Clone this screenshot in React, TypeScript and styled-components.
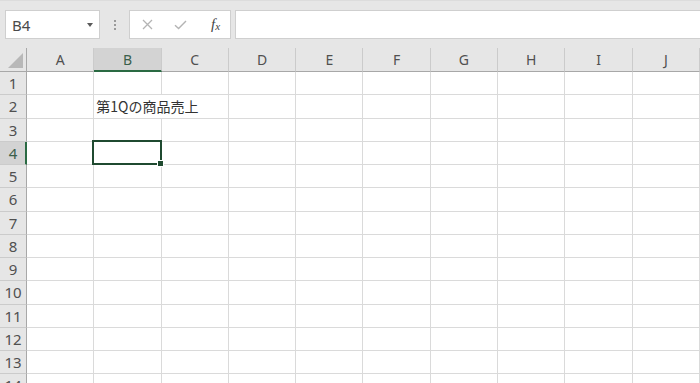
import React from 'react';
import styled, { createGlobalStyle } from 'styled-components';

const COLUMNS = ['A', 'B', 'C', 'D', 'E', 'F', 'G', 'H', 'I', 'J'];
const ROWS = Array.from({ length: 14 }, (_, i) => i + 1);

const SELECTED_COL = 'B';
const SELECTED_ROW = 4;

// cell contents keyed by address
const CELLS: Record<string, string> = {
  B2: '第1Qの商品売上',
};

function App() {
  return (
    <Page>
      <GlobalStyle />
      <FormulaBar>
        <NameBox>
          <span>B4</span>
          <DropArrow />
        </NameBox>
        <Grip>
          <i />
          <i />
          <i />
        </Grip>
        <FormulaButtons>
          <ActionSlot>
            <svg width="11" height="11" viewBox="0 0 11 11">
              <path d="M1 1L10 10M10 1L1 10" stroke="#b4b4b4" strokeWidth="1.3" fill="none" />
            </svg>
          </ActionSlot>
          <ActionSlot>
            <svg width="13" height="10" viewBox="0 0 13 10">
              <path d="M1 5.2L4.6 8.6L12 1" stroke="#b4b4b4" strokeWidth="1.4" fill="none" />
            </svg>
          </ActionSlot>
          <ActionSlot>
            <Fx>
              f<sub>x</sub>
            </Fx>
          </ActionSlot>
        </FormulaButtons>
        <FormulaInput />
      </FormulaBar>

      <Sheet>
        <Corner>
          <CornerTriangle />
        </Corner>
        {COLUMNS.map((c) => (
          <ColumnHeader key={c} $active={c === SELECTED_COL}>
            {c}
          </ColumnHeader>
        ))}
        {ROWS.map((r) => (
          <React.Fragment key={r}>
            <RowHeader $active={r === SELECTED_ROW}>{r}</RowHeader>
            {COLUMNS.map((c, i) => {
              const address = `${c}${r}`;
              const next = COLUMNS[i + 1];
              const overflows = Boolean(CELLS[address]) && next && !CELLS[`${next}${r}`];
              return (
                <Cell
                  key={address}
                  $selected={c === SELECTED_COL && r === SELECTED_ROW}
                  $open={Boolean(overflows)}
                >
                  {CELLS[address]}
                </Cell>
              );
            })}
          </React.Fragment>
        ))}
      </Sheet>
    </Page>
  );
}

export default App;

const GlobalStyle = createGlobalStyle`
  html, body {
    margin: 0;
    padding: 0;
    background: #ffffff;
    overflow: hidden;
  }

  body {
    font-family: "Noto Sans CJK JP", "Noto Sans", sans-serif;
  }
`;

const Page = styled.div`
  width: 700px;
  height: 383px;
  overflow: hidden;
  background: #ffffff;
`;

const FormulaBar = styled.div`
  box-sizing: border-box;
  height: 48px;
  display: flex;
  align-items: flex-start;
  padding: 9px 0 0 5px;
  background: #e6e6e6;
  border-top: 1px solid #dcdcdc;
`;

const NameBox = styled.div`
  box-sizing: border-box;
  width: 95px;
  height: 29px;
  display: flex;
  align-items: center;
  justify-content: space-between;
  padding: 0 6px 0 6px;
  background: #ffffff;
  border: 1px solid #cfcfcf;
  color: #4a4a4a;
  font-family: "Noto Sans", "Liberation Sans", sans-serif;
  font-size: 15px;
`;

const DropArrow = styled.span`
  width: 0;
  height: 0;
  border-left: 3.5px solid transparent;
  border-right: 3.5px solid transparent;
  border-top: 4px solid #5a5a5a;
  margin-top: 1px;
`;

const Grip = styled.div`
  width: 29px;
  height: 29px;
  display: flex;
  flex-direction: column;
  align-items: center;
  justify-content: center;
  gap: 2px;

  & > i {
    width: 2px;
    height: 2px;
    background: #9a9a9a;
  }
`;

const FormulaButtons = styled.div`
  box-sizing: border-box;
  width: 102px;
  height: 29px;
  display: flex;
  align-items: center;
  padding-left: 1px;
  background: #ffffff;
  border: 1px solid #cfcfcf;
`;

const ActionSlot = styled.div`
  width: 34px;
  height: 100%;
  display: flex;
  align-items: center;
  justify-content: center;
`;

const Fx = styled.span`
  font-family: "Liberation Serif", serif;
  font-style: italic;
  font-size: 15px;
  color: #444444;
  margin-left: 4px;

  & > sub {
    font-size: 11px;
    vertical-align: -1px;
  }
`;

const FormulaInput = styled.div`
  box-sizing: border-box;
  flex: 1;
  height: 29px;
  margin-left: 4px;
  background: #ffffff;
  border: 1px solid #cfcfcf;
  border-right: none;
`;

const Sheet = styled.div`
  display: grid;
  grid-template-columns: 27px repeat(10, 67.3px);
  grid-template-rows: 24px repeat(14, 23.25px);
  background: #ffffff;
`;

const HeaderBase = styled.div`
  box-sizing: border-box;
  display: flex;
  align-items: center;
  justify-content: center;
  background: #e6e6e6;
  color: #505050;
  font-family: "Noto Sans", "Liberation Sans", sans-serif;
  font-size: 14px;
`;

const Corner = styled(HeaderBase)`
  align-items: flex-end;
  justify-content: flex-end;
  padding: 0 3px 3px 0;
  border-right: 1px solid #a8a8a8;
  border-bottom: 1px solid #a8a8a8;
`;

const CornerTriangle = styled.div`
  width: 15px;
  height: 15px;
  background: #b8b8b8;
  clip-path: polygon(100% 0, 100% 100%, 0 100%);
`;

const ColumnHeader = styled(HeaderBase)<{ $active: boolean }>`
  border-right: 1px solid #cbcbcb;
  border-bottom: ${(p) => (p.$active ? '2px solid #2a6a43' : '1px solid #a8a8a8')};
  background: ${(p) => (p.$active ? '#d3d3d3' : '#e6e6e6')};
  color: ${(p) => (p.$active ? '#3a5f4b' : '#505050')};
  padding-top: ${(p) => (p.$active ? '1px' : '0')};
`;

const RowHeader = styled(HeaderBase)<{ $active: boolean }>`
  border-bottom: 1px solid #cbcbcb;
  border-right: ${(p) => (p.$active ? '2px solid #2a6a43' : '1px solid #a8a8a8')};
  background: ${(p) => (p.$active ? '#d3d3d3' : '#e6e6e6')};
  color: ${(p) => (p.$active ? '#3a5f4b' : '#505050')};
  padding-left: ${(p) => (p.$active ? '1px' : '0')};
  font-size: 15px;
`;

const Cell = styled.div<{ $selected: boolean; $open: boolean }>`
  box-sizing: border-box;
  position: relative;
  display: flex;
  align-items: center;
  padding-left: 2px;
  border-bottom: 1px solid #dadada;
  border-right: ${(p) => (p.$open ? 'none' : '1px solid #dadada')};
  white-space: nowrap;
  overflow: visible;
  z-index: ${(p) => (p.$selected ? 2 : 1)};
  color: #333333;
  font-size: 14px;

  ${(p) =>
    p.$selected &&
    `
    &::after {
      content: '';
      position: absolute;
      top: -2px;
      left: -2px;
      right: -1px;
      bottom: -1px;
      border: 2px solid #1f4a30;
    }

    &::before {
      content: '';
      position: absolute;
      right: -3px;
      bottom: -3px;
      width: 5px;
      height: 5px;
      background: #1f4a30;
      border: 1px solid #ffffff;
      z-index: 1;
    }
  `}
`;
